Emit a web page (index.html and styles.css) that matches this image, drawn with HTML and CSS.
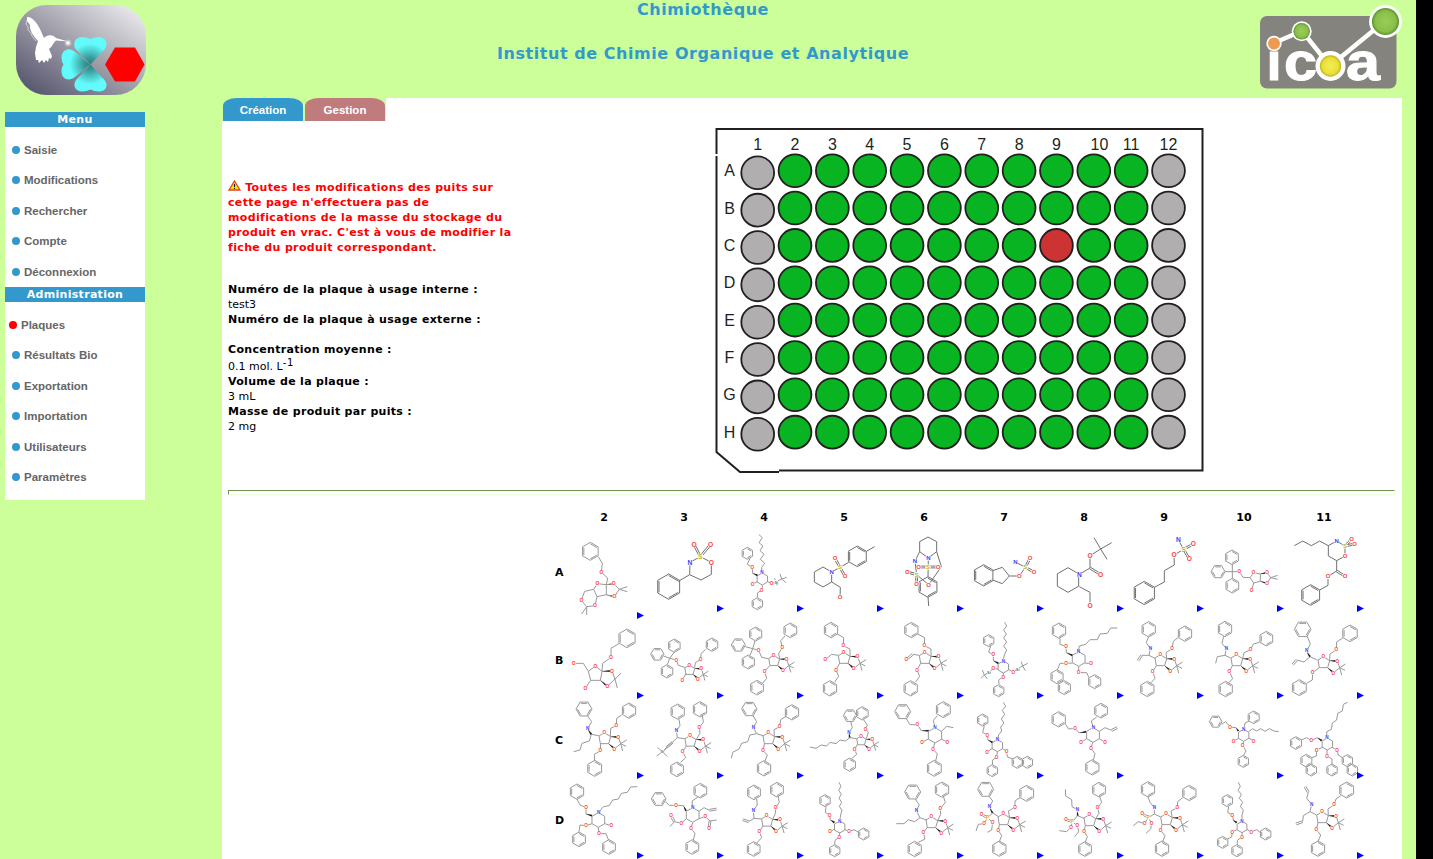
FILE: index.html
```html
<!DOCTYPE html>
<html lang="fr">
<head>
<meta charset="utf-8">
<title>Chimiothèque</title>
<link rel="stylesheet" href="styles.css">
</head>
<body>
<header class="banner">
  <svg class="logo" width="130" height="90" viewBox="0 0 130 90">
    <defs>
      <linearGradient id="lg" x1="0" y1="1" x2="1" y2="0"><stop offset=".08" stop-color="#585870"/><stop offset=".5" stop-color="#a09ea9"/><stop offset="1" stop-color="#f4f3f5"/></linearGradient>
      <radialGradient id="cl" gradientUnits="userSpaceOnUse" cx="74" cy="59" r="27"><stop offset="0" stop-color="#258080"/><stop offset=".25" stop-color="#3a9d9d"/><stop offset=".75" stop-color="#62fafa"/></radialGradient>
    </defs>
    <rect width="130" height="90" rx="31" fill="url(#lg)"/>
    <path d="M11 12C15 11 21 17 24 24L28 33C31 30 36 29 40 33L52 36.500L40 35.500C37 38 36 42 33 44L36 51L35 54L33 53L32 57L30 55L28 58L26 55L23 58L22 55L20 55L19 48L20 42L22 36C17 31 13 24 14 20L11 16Z" fill="#fff"/>
    <path d="M11 15L10 19L12 22L12 25L15 28L16 31L20 36" fill="none" stroke="#ddd" stroke-width=".8"/>
    <circle cx="52" cy="38" r="1.800" fill="#fff"/><circle cx="52" cy="38" r="3.500" fill="#fff" opacity=".3"/>
    <g fill="url(#cl)">
      <path d="M74.500 59.500L60 44.500C56 39 59 32 66 32Q71 32 74.500 34Q78 32 83 32C90 32 93 39 88.500 44.500Z"/>
      <path d="M74.500 59.500L60 75C56 81 60 86.500 66 86.500Q71 86.500 74.500 84.500Q78 86.500 83 86.500C90 86.500 93 80 88.500 75Z"/>
      <path d="M74 59.500L58 46C51 41.500 45.500 46 45.500 52.500Q45.500 57 47.500 59.500Q45.500 62 45.500 66.500C45.500 74 53 77 59 72Z"/>
    </g>
    <path d="M89 59.500L99 42.500H119L128.500 59.500L119 76.500H99Z" fill="red"/>
  </svg>
  <div class="titles"><h1>Chimiothèque</h1><h1>Institut de Chimie Organique et Analytique</h1></div>
  <svg class="icoa" width="142" height="90" viewBox="1260 0 142 90">
    <defs>
      <radialGradient id="g1"><stop offset="0" stop-color="#9ccc5a"/><stop offset=".75" stop-color="#88c047"/><stop offset="1" stop-color="#5b9431"/></radialGradient>
      <radialGradient id="g2"><stop offset="0" stop-color="#f4ee55"/><stop offset=".75" stop-color="#e8e038"/><stop offset="1" stop-color="#c5b021"/></radialGradient>
    </defs>
    <rect x="1260" y="16" width="136.500" height="72.500" rx="7" fill="#85837d"/>
    <g class="icoa-text"><text x="1266.500" y="79.500" font-size="51" textLength="15" lengthAdjust="spacingAndGlyphs">ı</text><text x="1284" y="79.500" font-size="51" textLength="33" lengthAdjust="spacingAndGlyphs">c</text><text x="1346" y="79.500" font-size="51" textLength="34" lengthAdjust="spacingAndGlyphs">a</text></g>
    <path d="M1274 43L1302 31L1330 66L1385 21" fill="none" stroke="#fff" stroke-width="4.500"/>
    <circle cx="1274" cy="43.500" r="7.700" fill="#fff"/><circle cx="1274" cy="43.500" r="6" fill="#ec9b50"/>
    <circle cx="1301.700" cy="31.300" r="10" fill="#fff"/><circle cx="1301.700" cy="31.300" r="8.300" fill="url(#g1)"/>
    <circle cx="1330.500" cy="66" r="15" fill="#fff"/><circle cx="1330.500" cy="66" r="10.700" fill="url(#g2)"/>
    <circle cx="1385.500" cy="21.500" r="16.400" fill="#fff"/><circle cx="1385.500" cy="21.500" r="13.600" fill="url(#g1)"/>
  </svg>
</header>
<div class="layout">
  <nav class="menu">
    <h2>Menu</h2>
    <ul><li>Saisie</li><li>Modifications</li><li>Rechercher</li><li>Compte</li><li>Déconnexion</li></ul>
    <h2>Administration</h2>
    <ul class="last"><li class="current">Plaques</li><li>Résultats Bio</li><li>Exportation</li><li>Importation</li><li>Utilisateurs</li><li>Paramètres</li></ul>
  </nav>
  <main class="content">
    <div class="tabs"><span class="tab">Création</span><span class="tab manage">Gestion</span></div>
    <section class="summary">
      <div class="info">
        <p class="warning"><svg width="13" height="11" viewBox="0 0 13 11"><path d="M6.500 1L12 10H1Z" fill="#ffe800" stroke="#e8401c" stroke-width="1.300"/><path d="M6.500 4V7.300M6.500 8V9" stroke="#222" stroke-width="1.200"/></svg> Toutes les modifications des puits sur<br>cette page n'effectuera pas de<br>modifications de la masse du stockage du<br>produit en vrac. C'est à vous de modifier la<br>fiche du produit correspondant.</p>
        <dl>
          <dt>Numéro de la plaque à usage interne :</dt><dd>test3</dd>
          <dt>Numéro de la plaque à usage externe :</dt><dd>&nbsp;</dd>
          <dt>Concentration moyenne :</dt><dd class="conc">0.1 mol. L<sup>-1</sup></dd>
          <dt>Volume de la plaque :</dt><dd>3 mL</dd>
          <dt>Masse de produit par puits :</dt><dd>2 mg</dd>
        </dl>
      </div>
      <svg id="plate" class="plate" width="490" height="348" viewBox="715 127 490 348"></svg>
    </section>
    <div class="rule"></div>
    <div id="molecules" class="molecules"></div>
  </main>
</div>
<script src="script.js"></script>
</body>
</html>
```
FILE: styles.css
```css
html { background: #000; overflow: hidden; }
body { margin: 0; width: 1416px; height: 859px; overflow: hidden; background: #cf9; font-family: "DejaVu Sans", Verdana, sans-serif; font-size: 11px; color: #000; }
.banner { display: flex; width: 1402px; height: 98px; }
.logo { margin: 5px 0 0 16px; flex: none; }
.icoa { flex: none; }
.icoa-text { font-family: "Liberation Sans", Arial, sans-serif; font-weight: bold; fill: #fff; stroke: #fff; stroke-width: 1px; }
.titles { flex: 1; text-align: center; }
.titles h1 { margin: 0 0 24px; font-size: 16px; line-height: 20px; letter-spacing: .56px; color: #39c; }
.layout { display: flex; align-items: flex-start; }
.menu { width: 140px; margin: 14px 77px 0 5px; background: #fff; flex: none; }
.menu h2 { margin: 0; background: #39c; color: #fff; font-size: 11px; line-height: 16px; height: 15px; letter-spacing: .3px; text-align: center; }
.menu ul { list-style: none; margin: 0; padding: 7.5px 0 0 7px; }
.menu ul.last { padding-bottom: 7.5px; }
.menu li { display: flex; align-items: center; height: 30.5px; gap: 4px; font: bold 11.5px "Liberation Sans", Arial, sans-serif; color: #666; }
.menu li::before { content: ""; width: 8px; height: 8px; border-radius: 50%; background: #39c; }
.menu li.current { margin-left: -3px; }
.menu li.current::before { background: red; }
.content { width: 1180px; height: 761px; background: #fff; overflow: hidden; }
.tabs { display: flex; gap: 2px; width: 163px; height: 23px; padding-left: 1px; background: #cf9; }
.tab { width: 80px; border-radius: 14px 14px 0 0 / 8px 8px 0 0; background: #39c; color: #fff; text-align: center; font: bold 11.5px/24px "Liberation Sans", Arial, sans-serif; }
.manage { background: #c07c7c; }
.summary { display: flex; height: 369px; padding-left: 6px; }
.info { width: 487px; padding-top: 59px; line-height: 15px; }
.info p, .info dl, .info dd { margin: 0; }
.warning { color: red; font-weight: bold; height: 75px; letter-spacing: .35px; white-space: nowrap; }
.info dl { padding-top: 27px; }
.info dt { font-weight: bold; letter-spacing: .31px; }
.conc { height: 17px; line-height: 19px; }
.conc sup { font-size: 10px; line-height: 0; letter-spacing: .8px; vertical-align: 4px; }
.plate { margin-top: 6px; }
.plate text { font: 16px "Liberation Sans", Arial, sans-serif; fill: #231f20; text-anchor: middle; }
.rule { margin: 0 7px 0 6px; height: 3px; border: 1px solid; border-color: #72904f #efffdc #efffdc #72904f; }
.molecules { display: grid; grid-template-columns: 36px repeat(10, 80px); grid-template-rows: 29px 96px repeat(3, 80px); margin-left: 306px; font-weight: bold; }
.head, .label { display: flex; align-items: center; justify-content: center; }
.head { padding-top: 17px; line-height: 12px; }
.label { justify-content: flex-start; padding-left: 27px; width: 9px; }
.cell { display: grid; }
.cell > * { grid-area: 1 / 1; }
.cell svg { overflow: visible; font-family: "Liberation Sans", Arial, sans-serif; font-weight: bold; }
.arrow { place-self: end; width: 7px; height: 7px; margin-bottom: 1px; background: #00f; clip-path: polygon(0 0, 100% 50%, 0 100%); }
.arrow.raised { margin-bottom: 8px; }
```
FILE: script.js
```javascript
// Drawing codes: B/Q benzene (pointed / flat top), H plain ring, L line, D double bond,
// W wedge, F fused furanose-acetonide core, O/N/S/P/I atoms.
const rowsData = {
A: [
"B 151 154 27;L 175 170 187 190 184 217 203 234 199 254;O 184 217;L 172 251 199 254 199 284 171 290 161 268 172 251;W 199 254 221 251;W 199 284 223 290;L 199 254 221 251 238 268 223 290 199 284;L 238 268 262 260;L 238 268 262 275;L 161 268 134 274 124 301 140 320 165 317 171 290;L 140 320 125 342;L 140 320 140 344;O 172 251;O 221 251;O 223 290;O 124 301;O 165 317",
"B 386 260 38;L 415 244 449 224 450 187 481 170 514 187 514 223 483 240 449 224;D 481 170 462 133;D 481 170 512 133;N 450 187;S 481 170;O 514 187;O 462 133;O 512 133",
"B 622 160 18;L 630 175 622 193 637 202 638 220 654 226;L 657 104 667 113 657 128 669 138 660 152 672 163 661 178 674 190 665 202 666 218;H 667 237 18;L 651 246 638 252;L 683 245 695 251 708 246 725 237 720 222;L 725 237 740 232;L 725 237 738 248;L 704 235 712 256;L 667 256 667 270 653 278 652 292;B 652 311 18;W 638 220 652 226;O 637 202;N 666 218;O 638 252;O 695 251;I 709 246;O 665 270",
"H 69 231 30;L 95 216 120 202 146 187;D 120 202 105 175;D 120 202 135 229;B 172 169 31;L 199 154 224 140;L 95 246 121 262 120 292;N 95 216;S 120 202;O 105 175;O 135 229;O 120 292",
"L 385 174 359 155 359 125 384 111 410 125 410 155 385 174;L 359 155 345 183 350 224 386 254 424 200 410 155;L 385 174 384 230;D 356 201 384 201;D 384 201 414 201;D 350 224 322 216;D 350 224 350 252;B 384 261 31;L 384 290 386 318;N 385 174;N 345 183;S 384 201;O 356 201;O 414 201;O 386 254;S 350 224;O 322 216;O 350 252",
"B 551 226 32;L 578 212 607 202 628 228 607 251 578 240;L 628 228 658 228 676 202 646 186;D 676 202 690 175;D 676 202 702 216;O 658 228;S 676 202;N 646 186;O 690 175;O 702 216",
"H 804 240 37;L 838 223 870 204 870 167 902 147 882 113;L 902 147 935 128;L 902 147 921 178;D 870 204 902 224;L 838 260 870 277 870 316;N 838 223;O 870 167;O 902 224;O 870 316",
"B 193 279 35;L 223 262 253 246 253 212 283 195 282 165 311 148 295 120;D 311 148 340 132;D 311 148 328 177;O 282 165;S 311 148;N 295 120;O 340 132;O 328 177",
"B 456 172 22;Q 414 215 21;B 457 257 22;L 457 193 457 236;L 435 215 478 215 489 232 510 233 521 218 541 222 541 244 521 249 510 233;L 541 222 561 218 572 233 561 250 541 244;W 541 222 560 218;W 541 244 560 250;L 572 233 593 226;L 572 233 593 238;L 521 249 515 271;O 478 215;O 521 218;O 561 218;O 561 250;O 515 271",
"L 643 137 668 123 694 137 719 123 745 137 770 123 795 138 795 168 770 182 745 168 745 137;D 795 138 815 118;D 795 138 824 132;L 770 182 770 213 744 229 744 256 719 270;D 770 213 795 229;B 692 285 31;N 770 123;S 795 138;O 795 168;O 815 118;O 824 132;O 744 229;O 795 229"],
B: [
"B 261 415 28;L 237 431 213 445 213 472 188 490 186 514 166 498 145 514 152 541 181 541 186 514;L 186 514 216 513 225 537 202 559 181 541;L 225 537 243 520;L 225 537 232 564;L 145 514 130 490 101 490;L 152 541 136 565;W 186 514 213 513;W 181 541 200 557;O 213 472;O 166 498;O 216 513;O 202 559;O 101 490;O 136 565",
"B 403 437 20;Q 352 463 20;B 381 514 20;L 403 456 389 475 382 494;L 371 468 389 475 409 480 415 496 434 502;F 448 495 .85;L 464 503 466 488 482 478 483 461 497 448;B 516 434 20;L 438 521 427 540;O 409 480;O 482 478;O 427 540",
"B 647 402 21;Q 595 435 21;B 625 486 21;L 645 423 638 446 630 466;L 616 440 638 446 656 451 665 472 685 476;F 701 466 .93;L 719 477 716 460 727 443 722 422 735 408;B 751 391 22;L 689 497 674 515 680 535 668 550;B 651 563 22;O 656 451;O 727 443;O 674 515",
"B 93 390 23;L 112 402 131 413 130 437 150 447 150 468;F 131 457 1;L 115 466 95 463 76 479;L 119 490 108 510 116 529 104 546;B 90 565 23;O 130 437;O 76 479;O 108 510",
"B 334 390 23;L 353 402 374 413 373 437 393 447 393 468;F 374 457 1;L 358 466 338 463;D 338 463 319 479;L 362 490 351 510 359 529 347 546;B 332 565 23;O 373 437;O 319 479;O 351 510",
"B 566 422 18;L 572 438 566 456 580 464 580 482 595 488;L 614 367 620 378 611 390 619 402 611 414 620 426 611 438 620 450 613 465 609 483;H 610 501 18;L 595 508 580 504 568 517 553 525 547 510;L 543 535 553 525 562 537;L 626 509 640 516 653 506 668 498 664 485;L 683 490 668 498 676 512;L 610 519 610 530 596 540 597 553;B 596 572 18;W 580 482 595 490;O 580 464;N 610 483;O 580 504;I 567 517;O 640 516;I 653 507;O 610 531",
"B 777 392 23;L 780 415 780 433 798 440 799 458 818 465;H 836 477 22;L 835 454 838 438 857 433 870 419 892 419 900 402 922 400 932 384 952 384;L 818 489 798 490 780 490 772 510;B 771 530 21;B 793 563 21;L 855 489 873 491;L 836 499 836 518 860 518 867 533;B 884 545 21;W 799 458 817 466;O 798 440;N 835 454;O 798 490;O 873 491;O 836 518",
"B 206 388 23;L 206 410 199 428 211 446 207 466 225 475;L 207 466 185 466;D 185 466 174 482;F 241 464 1;L 260 476 258 458 276 446 280 424 294 413;B 315 401 23;L 229 497 218 515 225 535 213 548;B 202 567 23;N 211 446;O 276 446;O 218 515",
"B 435 387 23;L 431 409 426 430 439 446 435 466 452 474;L 435 466 412 470 407 490;F 469 464 1;L 488 476 492 458 512 449 520 432 538 427;B 559 416 22;L 457 497 448 515 458 536 447 548;B 437 567 23;N 439 446;O 512 449;O 448 515",
"Q 668 388 25;L 681 408 691 432 680 452 690 470 712 480;L 690 470 672 486 650 480;D 650 480 638 494;F 730 470 1;L 749 482 750 462 769 449 770 426 788 414;B 810 400 25;L 718 503 698 518 697 540 680 550;B 658 563 24;W 680 455 690 470;N 680 452;O 769 449;O 698 518"],
C: [
"Q 132 42 24;L 142 62 155 80 143 100 154 118 176 122;W 143 103 154 118;L 154 118 148 138 126 145 120 165 101 170;F 193 113 1;L 211 124 212 100 229 92 230 70 245 60;B 267 47 23;L 182 145 181 167 163 178 164 198;B 164 220 24;N 143 100;O 229 92;O 181 167",
"B 413 50 23;L 417 73 420 92 409 107 412 128 434 131;L 412 128 367 170;D 398 142 380 157;F 450 122 .95;L 469 133 480 115 478 97 490 82 487 62;B 480 43 23;L 439 153 428 170 437 188 422 202;B 411 223 22;L 353 158 367 170 350 183;L 382 158 367 170 382 185;N 409 107;I 367 170;O 478 97;O 428 170",
"Q 628 42 23;L 638 60 650 80 640 98 650 116 669 122;L 650 116 630 120 623 140 605 145 597 162 578 172 574 190;F 685 113 1;L 703 124 702 104 719 95 722 74 738 64;B 756 52 23;L 674 145 669 167 682 180 675 198;B 672 220 23;N 640 98;O 719 95;O 669 167",
"Q 150 62 20;B 187 55 20;L 152 80 157 98 147 111 149 128 170 131;W 147 113 149 128;L 149 128 137 138 120 135 108 146 90 142 80 153 64 150 48 160 30 156;F 183 123 .8;L 199 131 205 112 197 102 202 90 190 73;L 172 148 164 164 170 178 156 190;B 149 209 20;N 147 111;O 197 102;O 164 164",
"Q 308 50 24;L 318 70 330 89 352 89 364 107 386 107;W 364 107 386 107;H 405 121 23;L 405 98 400 76 412 62;B 430 44 24;L 424 109 440 94 460 98;L 385 132 366 142;L 424 132 442 142;L 404 144 399 164 412 176 407 198;B 403 220 24;O 352 89;N 405 98;O 366 142;O 442 142;O 399 164",
"B 548 75 18;L 553 92 548 112 562 120 564 135 578 141;L 610 22 617 34 607 46 614 58 604 72 612 84 602 96 605 108 596 120 592 134;H 592 152 18;L 577 160 561 171;L 607 160 620 170 622 186 640 192;B 652 202 18;B 682 202 18;L 592 170 590 186 577 196 578 210;B 577 227 18;W 564 135 577 142;O 562 120;N 592 134;O 561 171;O 620 170;O 590 186",
"B 776 73 23;L 795 85 806 102 825 100 838 114 858 110;W 838 114 858 110;H 879 120 22;L 880 98 874 78 890 66;B 903 47 22;L 898 109 915 98 935 106;D 935 106 952 98;L 860 131 843 142;L 898 131 915 142;L 878 142 873 160 885 176 880 196;B 877 217 23;O 825 100;N 880 98;O 843 142;O 915 142;O 873 160",
"",
"Q 407 80 19;L 425 88 437 80 450 96 468 98 477 108;W 468 98 475 108;H 491 121 18;L 491 102 495 84 508 78;B 521 67 19;L 506 110 518 101 530 108 542 101 555 109 568 101 582 108 596 110;L 476 130 461 138;L 507 130 521 138;L 491 139 488 152 498 168 491 180;B 490 199 18;O 450 96;N 491 102;O 461 138;O 521 138;O 488 152",
"B 648 144 19;L 664 135 680 128 694 137 712 128 725 135;W 712 128 725 137;L 803 22 790 28 787 48 773 55 770 75 757 84 754 103 740 110 741 128;H 742 147 18;L 727 157 710 165 709 183 695 188;B 679 197 19;B 694 225 18;L 741 165 741 183 756 192 756 208;B 756 225 18;L 757 157 771 165 775 180 790 190;B 802 197 18;B 817 225 18;O 694 137;N 741 128;O 710 165;O 741 183;O 771 165"],
D: [
"B 111 290 23;L 111 312 120 330 138 338 138 357 156 362;W 138 357 156 362;H 175 375 22;L 176 352 190 335 208 332 218 315 235 312 244 295 262 292 272 276 292 275;L 156 386 138 392 120 390 117 410;B 117 433 22;L 194 386 214 392;L 175 397 177 416 198 416 206 436;B 207 456 22;O 138 338;N 176 352;O 138 392;O 214 392;O 177 416",
"Q 356 312 22;L 376 320 388 331 408 331 430 332 438 345;W 430 332 438 347;H 458 360 22;L 458 338 456 318 474 306;B 481 287 22;L 477 349 492 338 508 346;D 508 346 530 342;L 439 371 424 385 403 380 390 395;D 403 380 393 362;L 477 371 496 365 510 378 530 375;D 510 378 507 400;L 458 382 453 401 465 415 460 436;B 457 456 22;O 408 331;N 458 338;O 424 385;O 393 362;O 496 365;O 507 400;O 453 401",
"B 642 292 22;L 650 312 652 330 640 347 642 370 664 372;L 642 370 626 380;D 626 380 608 374;F 680 362 .95;L 698 373 706 356 707 338 718 322 714 302;B 711 284 22;L 669 393 658 410 665 428 650 444;B 641 462 22;N 640 347;O 707 338;O 658 410",
"B 75 317 18;L 78 335 76 352 89 360 91 375 104 380;W 91 375 103 383;L 117 262 123 274 116 286 124 298 117 310 125 322 118 334 126 346 122 360 119 378;H 119 396 18;L 104 402 90 410;L 134 403 147 410 162 404 175 412;B 191 417 18;L 119 412 118 426 105 436 104 450;B 104 467 18;O 89 360;N 119 378;O 90 410;O 147 410;O 118 426",
"Q 338 291 24;L 346 312 358 330 349 347 360 368 379 375;L 360 368 344 380 325 374 312 386 289 386;F 394 365 1;L 413 377 422 358 421 341 436 322 430 304;B 426 284 23;L 382 397 370 413 375 432 355 442;B 344 462 23;N 349 347;O 421 341;O 370 413",
"Q 557 283 24;L 566 302 578 318 568 335 578 354 594 364;W 568 338 578 354;L 578 354 563 368 552 386 535 388 528 408;L 563 368 578 383 575 405 562 412;D 563 368 545 359;F 610 356 1;L 629 368 625 348 645 337 645 318 660 308;B 680 295 24;L 598 389 595 406 605 422 598 440;B 598 461 23;N 568 335;P 563 368;O 545 359;O 578 383;O 552 386;O 645 337;O 595 406",
"L 796 283 797 303 815 314 816 335 832 344 833 362 852 370;W 832 347 833 362;L 833 362 817 380 813 397 800 410 778 407;L 817 380 832 392 836 410 824 425;D 817 380 798 374;F 868 359 1;L 887 371 897 355 893 338 905 322 898 302;B 897 284 22;L 856 392 852 409 862 425 856 442;B 855 462 22;N 832 344;P 817 380;O 798 374;O 813 397;O 832 392;O 893 338;O 852 409",
"B 204 283 23;L 204 305 210 322 223 338 223 357 242 366;L 223 357 205 368 194 386 175 380 160 392;L 205 368 215 386 212 402 198 415;D 205 368 187 356;F 258 356 1;L 277 368 273 348 292 338 293 320 308 308;B 328 294 23;L 246 389 242 406 255 422 248 440;B 246 461 23;N 223 338;P 205 368;O 187 356;O 194 386;O 215 386;O 292 338;O 242 406",
"B 442 317 18;L 446 335 443 352 457 360 460 375 471 382;W 458 375 470 383;L 475 262 481 274 474 286 484 298 478 310 488 322 481 334 490 346 486 360 486 378;H 486 396 17;L 471 404 457 411 455 426 442 432;B 428 442 18;L 500 403 514 411 530 404 540 412;B 557 417 18;L 486 412 486 426 472 436 472 450;B 471 467 18;O 457 360;N 486 378;O 457 411;O 514 411;O 486 426",
"D 675 275 685 292;L 685 292 680 310 695 328 690 350 710 360;L 690 350 670 362 668 380;D 668 380 648 387;F 726 350 1;L 745 362 744 342 762 329 768 312 782 302;B 800 285 24;L 714 383 709 404 722 420 714 440;B 714 461 23;N 695 328;O 762 329;O 709 404"]
};
const atomColors = { O: '#ff4040', N: '#4040ff', S: '#b8b020', P: '#ff9a20', I: '#508080' };
const pointString = p => p.map(v => v.toFixed(1)).join(' ');

function ring(x, y, r, flat, aromatic) {
  const at = (i, rr) => {
    const a = (i * 60 + (flat ? 0 : -90)) * Math.PI / 180;
    return [x + rr * Math.cos(a), y + rr * Math.sin(a)];
  };
  let d = 'M' + [0, 1, 2, 3, 4, 5].map(i => pointString(at(i, r))).join('L') + 'Z';
  if (aromatic) for (const i of [0, 2, 4]) d += 'M' + pointString(at(i, r - 4.5)) + 'L' + pointString(at(i + 1, r - 4.5));
  return `<path d="${d}"/>`;
}

function draw(code, size) {
  let bonds = '', atoms = '';
  const atom = (t, x, y) => {
    atoms += `<circle cx="${x}" cy="${y}" r="${size * .46}" fill="#fff" stroke="none"/><text stroke="none" x="${x}" y="${y + size * .36}" font-size="${t === 'I' ? size - 2 : size}" fill="${atomColors[t]}">${t === 'I' ? 'Si' : t}</text>`;
  };
  const wedge = (a, b, c, d) => {
    const q = Math.hypot(c - a, d - b), nx = (d - b) / q * 3, ny = (a - c) / q * 3;
    return `<path fill="#222" stroke="none" d="M${a} ${b}L${c + nx} ${d + ny}L${c - nx} ${d - ny}Z"/>`;
  };
  for (const part of code.split(';')) {
    const [k, ...rest] = part.split(' '), n = rest.map(Number);
    if (k === 'B' || k === 'Q') bonds += ring(n[0], n[1], n[2], k === 'Q', true);
    else if (k === 'H') bonds += ring(n[0], n[1], n[2], false, false);
    else if (k === 'L') bonds += `<polyline points="${n}"/>`;
    else if (k === 'D') {
      const q = Math.hypot(n[2] - n[0], n[3] - n[1]), nx = (n[3] - n[1]) / q * 2.7, ny = (n[0] - n[2]) / q * 2.7;
      bonds += `<path d="M${n[0] + nx} ${n[1] + ny}L${n[2] + nx} ${n[3] + ny}M${n[0] - nx} ${n[1] - ny}L${n[2] - nx} ${n[3] - ny}"/>`;
    } else if (k === 'W') bonds += wedge(...n);
    else if (k === 'F') {
      const [x, y, s] = n, p = (a, b) => [x + a * s, y + b * s];
      bonds += `<polyline points="${[p(0, 0), p(-16, 10), p(-12, 33), p(13, 33), p(19, 12), p(0, 0)]}"/><polyline points="${[p(19, 12), p(42, 13), p(49, 33), p(30, 49), p(13, 33)]}"/><polyline points="${[p(67, 22), p(49, 33), p(55, 55)]}"/><polyline points="${[p(49, 33), p(65, 41)]}"/>`;
      bonds += wedge(...p(19, 12), ...p(38, 13)) + wedge(...p(13, 33), ...p(27, 45));
      atom('O', ...p(0, 0)); atom('O', ...p(42, 13)); atom('O', ...p(30, 49));
    } else if (k) atom(k, n[0], n[1]);
  }
  return bonds + atoms;
}

let html = '<span></span>' + [2, 3, 4, 5, 6, 7, 8, 9, 10, 11].map(n => `<span class="head">${n}</span>`).join('');
const originX = [72, 312, 552, 12, 252, 492, 732, 132, 372, 612];
const originY = { A: 72, B: 360, C: 15, D: 255 };
for (const row of 'ABCD') {
  html += `<span class="label">${row}</span>`;
  const h = row === 'A' ? 96 : 80;
  rowsData[row].forEach((code, i) => {
    if (!code) { html += '<div class="cell"></div>'; return; }
    const large = row === 'A' && ![0, 2, 8].includes(i);
    const size = large ? ([1, 6, 7].includes(i) ? 20 : 18) : (row === 'A' || row === 'B') && i === 0 ? 15 : 14;
    html += `<div class="cell"><svg width="80" height="${h}" viewBox="${originX[i]} ${originY[row]} 240 ${h * 3}"><g fill="none" stroke="${large ? '#707070' : '#999'}" stroke-width="3" text-anchor="middle">${draw(code, size)}</g></svg><i class="arrow${row === 'A' && i ? ' raised' : ''}"></i></div>`;
  });
}
document.getElementById('molecules').innerHTML = html;

let plate = '<path d="M716.500 154V129H1202.500V470.500H779M716.500 156V452L740 472H779" fill="none" stroke="#231f20" stroke-width="2"/>';
const columnX = i => i ? 795 + (i - 1) * 37.35 : 757.7;
for (let c = 0; c < 12; c++) plate += `<text x="${c === 9 ? 1099.500 : columnX(c)}" y="150">${c + 1}</text>`;
for (let r = 0; r < 8; r++) {
  plate += `<text x="729.500" y="${176.3 + r * 37.35}">${'ABCDEFGH'[r]}</text>`;
  for (let c = 0; c < 12; c++) {
    const fill = c === 0 || c === 11 ? '#b0aeae' : r === 2 && c === 8 ? '#cc3433' : '#08b422';
    plate += `<circle cx="${columnX(c)}" cy="${(c ? 170.7 : 172.8) + r * 37.35}" r="16.400" fill="${fill}" stroke="#231f20" stroke-width="1.800"/>`;
  }
}
document.getElementById('plate').innerHTML = plate;
```
